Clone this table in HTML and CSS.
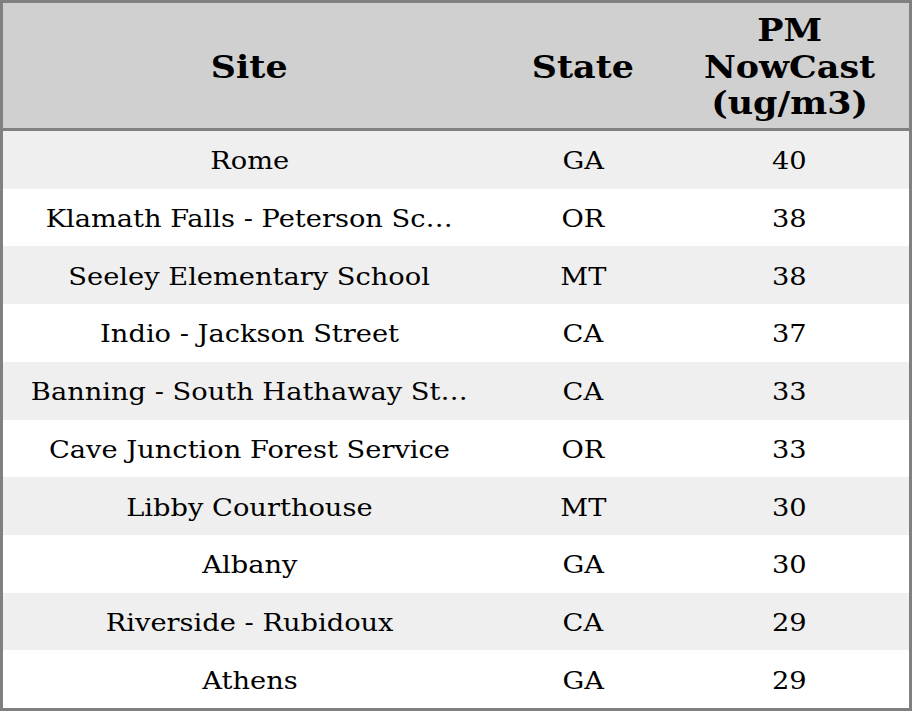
FILE: index.html
```html
<!DOCTYPE html>
<html>
<head>
<meta charset="utf-8">
<link rel="stylesheet" href="styles.css">
</head>
<body>
<div class="table">
  <div class="head">
    <div class="cell"><span class="t">Site</span></div>
    <div class="cell"><span class="t">State</span></div>
    <div class="cell"><span class="t">PM<br>NowCast<br>(ug/m3)</span></div>
  </div>
  <div class="row odd"><div class="cell"><span class="t">Rome</span></div><div class="cell"><span class="t">GA</span></div><div class="cell"><span class="t">40</span></div></div>
  <div class="row"><div class="cell"><span class="t">Klamath Falls - Peterson Sc…</span></div><div class="cell"><span class="t">OR</span></div><div class="cell"><span class="t">38</span></div></div>
  <div class="row odd"><div class="cell"><span class="t">Seeley Elementary School</span></div><div class="cell"><span class="t">MT</span></div><div class="cell"><span class="t">38</span></div></div>
  <div class="row"><div class="cell"><span class="t">Indio - Jackson Street</span></div><div class="cell"><span class="t">CA</span></div><div class="cell"><span class="t">37</span></div></div>
  <div class="row odd"><div class="cell"><span class="t">Banning - South Hathaway St…</span></div><div class="cell"><span class="t">CA</span></div><div class="cell"><span class="t">33</span></div></div>
  <div class="row"><div class="cell"><span class="t">Cave Junction Forest Service</span></div><div class="cell"><span class="t">OR</span></div><div class="cell"><span class="t">33</span></div></div>
  <div class="row odd"><div class="cell"><span class="t">Libby Courthouse</span></div><div class="cell"><span class="t">MT</span></div><div class="cell"><span class="t">30</span></div></div>
  <div class="row"><div class="cell"><span class="t">Albany</span></div><div class="cell"><span class="t">GA</span></div><div class="cell"><span class="t">30</span></div></div>
  <div class="row odd"><div class="cell"><span class="t">Riverside - Rubidoux</span></div><div class="cell"><span class="t">CA</span></div><div class="cell"><span class="t">29</span></div></div>
  <div class="row"><div class="cell"><span class="t">Athens</span></div><div class="cell"><span class="t">GA</span></div><div class="cell"><span class="t">29</span></div></div>
</div>
</body>
</html>
```
FILE: styles.css
```css
html, body {
  margin: 0;
  padding: 0;
  background: #ffffff;
}
.table {
  box-sizing: border-box;
  width: 912px;
  height: 711px;
  border: 3px solid #808080;
  display: flex;
  flex-direction: column;
  font-family: "DejaVu Serif", serif;
  color: #000;
}
.head, .row {
  display: grid;
  grid-template-columns: 493px 174px 1fr;
  align-items: center;
}
.head {
  box-sizing: border-box;
  height: 128px;
  flex: 0 0 auto;
  padding-top: 3px;
  background: #d0d0d0;
  border-bottom: 3px solid #808080;
  font-weight: bold;
  font-size: 32px;
  line-height: 36.5px;
}
.head .t {
  transform: scaleX(1.09);
}
.row {
  flex: 1 1 0;
  background: #ffffff;
  font-size: 24px;
}
.row .cell {
  padding-top: 3px;
}
.row.odd {
  background: #efefef;
}
.cell {
  text-align: center;
  white-space: nowrap;
}
.t {
  display: inline-block;
  transform: scaleX(1.136);
}
```
